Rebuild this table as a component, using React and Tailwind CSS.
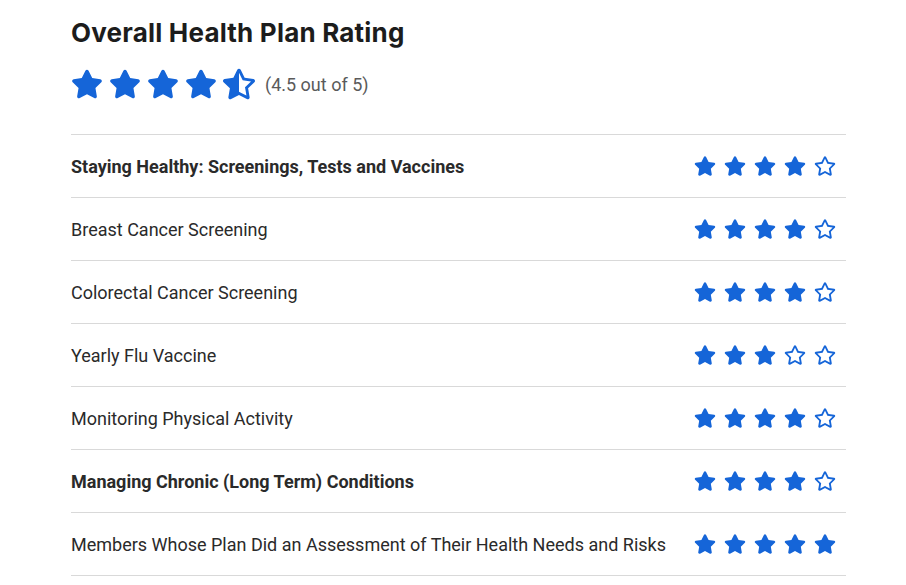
import React from "react";
import { FaStar, FaRegStar, FaStarHalfAlt } from "react-icons/fa";

const rows = [
  { label: "Staying Healthy: Screenings, Tests and Vaccines", stars: 4, bold: true },
  { label: "Breast Cancer Screening", stars: 4 },
  { label: "Colorectal Cancer Screening", stars: 4 },
  { label: "Yearly Flu Vaccine", stars: 3 },
  { label: "Monitoring Physical Activity", stars: 4 },
  { label: "Managing Chronic (Long Term) Conditions", stars: 4, bold: true },
  { label: "Members Whose Plan Did an Assessment of Their Health Needs and Risks", stars: 5 },
];

function Stars({ n }) {
  return (
    <div className="flex items-center gap-[8px] text-[#1565d8]">
      {[0, 1, 2, 3, 4].map((i) =>
        i < n ? <FaStar key={i} size={22} /> : <FaRegStar key={i} size={22} />
      )}
    </div>
  );
}

export default function App() {
  return (
    <div className="min-h-[585px] bg-white pl-[71px] pt-[17px]" style={{ fontFamily: "Roboto, sans-serif" }}>
      <div className="w-[775px]">
        <h1 className="text-[26px] font-bold text-[#1c1c1c] leading-[32px] tracking-[0.2px]" style={{ fontFamily: "Inter, sans-serif" }}>
          Overall Health Plan Rating
        </h1>
        <div className="mt-[19px] flex items-center">
          <div className="flex items-center gap-[6px] text-[#1565d8]">
            <FaStar size={32} />
            <FaStar size={32} />
            <FaStar size={32} />
            <FaStar size={32} />
            <FaStarHalfAlt size={32} />
          </div>
          <span className="ml-[10px] text-[18px] text-[#5a5a5a]">(4.5 out of 5)</span>
        </div>
        <div className="mt-[34px] border-t border-[#d9d9d9]">
          {rows.map((r) => (
            <div key={r.label} className="flex h-[63px] items-center justify-between border-b border-[#d9d9d9] pr-[10px]">
              <span className={`text-[18px] text-[#2a2a2a] ${r.bold ? "font-bold" : ""}`}>{r.label}</span>
              <Stars n={r.stars} />
            </div>
          ))}
        </div>
      </div>
    </div>
  );
}
